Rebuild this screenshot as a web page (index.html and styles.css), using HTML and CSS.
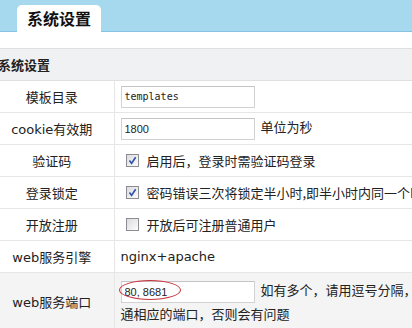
FILE: index.html
```html
<!DOCTYPE html>
<html lang="zh-CN">
<head>
  <meta charset="UTF-8">
  <title>系统设置</title>
  <link rel="stylesheet" href="styles.css">
</head>
<body>
  <div class="topbar">
    <div class="tab">系统设置</div>
  </div>

  <div class="panel">
    <table class="form">
      <colgroup><col class="col-label"><col class="col-value"></colgroup>
      <tr class="head"><th colspan="2">系统设置</th></tr>
      <tr>
        <td class="label">模板目录</td>
        <td class="value"><input class="text mono" type="text" value="templates"></td>
      </tr>
      <tr>
        <td class="label">cookie有效期</td>
        <td class="value"><input class="text" type="text" value="1800"><span class="hint">单位为秒</span></td>
      </tr>
      <tr>
        <td class="label">验证码</td>
        <td class="value"><span class="check on"><svg viewBox="0 0 11 11" width="11" height="11"><path d="M2.5 5.5 L4.6 8.4 L8.6 2.2" fill="none" stroke="#2a4fa8" stroke-width="1.6"/></svg></span><span class="opt">启用后，登录时需验证码登录</span></td>
      </tr>
      <tr>
        <td class="label">登录锁定</td>
        <td class="value"><span class="check on"><svg viewBox="0 0 11 11" width="11" height="11"><path d="M2.5 5.5 L4.6 8.4 L8.6 2.2" fill="none" stroke="#2a4fa8" stroke-width="1.6"/></svg></span><span class="opt">密码错误三次将锁定半小时,即半小时内同一个IP不能登录</span></td>
      </tr>
      <tr>
        <td class="label">开放注册</td>
        <td class="value"><span class="check"></span><span class="opt">开放后可注册普通用户</span></td>
      </tr>
      <tr>
        <td class="label">web服务引擎</td>
        <td class="value">nginx+apache</td>
      </tr>
      <tr class="active">
        <td class="label">web服务端口</td>
        <td class="value wrap">
          <span class="marked"><input class="text" type="text" value="80, 8681"><span class="ring"></span></span><span class="hint">如有多个，请用逗号分隔，并开通相应的端口，否则会有问题</span>
        </td>
      </tr>
    </table>
  </div>
</body>
</html>
```

FILE: styles.css
```css
body {
    margin: 0;
    width: 412px;
    height: 328px;
    overflow: hidden;
    background: #fff;
    color: #222;
    font-family: "DejaVu Sans", "Noto Sans CJK SC", sans-serif;
    font-size: 13px;
}

.topbar {
    display: flex;
    align-items: flex-end;
    height: 31px;
    padding-left: 17px;
    background: #a6d9ee;
    border-bottom: 1px solid #86c2e2;
}

.tab {
    margin-bottom: -1px;
    height: 27px;
    padding: 0 10px;
    background: #fff;
    border-radius: 5px 5px 0 0;
    font-family: "Noto Sans CJK SC", sans-serif;
    font-size: 16px;
    font-weight: bold;
    line-height: 27px;
    color: #111;
}

.panel {
    padding-top: 16px;
}

.form {
    width: 470px;
    margin-left: -10px;
    border-collapse: collapse;
    table-layout: fixed;
}

.col-label {
    width: 124px;
}

.col-value {
    width: 346px;
}

.form th {
    height: 31px;
    padding: 0 8px;
    text-align: left;
    background: #f0f1f3;
    border-top: 1px solid #dfe0e2;
    border-bottom: 1px solid #dfe0e2;
    font-family: "Noto Sans CJK SC", sans-serif;
    font-size: 13px;
    font-weight: bold;
}

.form td {
    height: 31px;
    padding: 0 6px;
    border-bottom: 1px solid #e6e6e6;
    vertical-align: middle;
    white-space: nowrap;
    overflow: hidden;
}

.form td.label {
    text-align: center;
    border-right: 1px solid #e6e6e6;
}

.form tr.active td {
    height: 50px;
    background: #f4f4f4;
}

.form td.wrap {
    white-space: normal;
    overflow: visible;
    padding: 4px 10px 3px 6px;
    line-height: 21px;
}

.text {
    box-sizing: border-box;
    width: 134px;
    height: 22px;
    margin: 0;
    padding: 0 3px;
    border: 1px solid #d2d2d2;
    border-top-color: #c4c4c4;
    background: #fff;
    color: #222;
    font-family: "Liberation Sans", sans-serif;
    font-size: 11px;
    vertical-align: middle;
}

.mono {
    font-family: "DejaVu Sans Mono", monospace;
    font-size: 10px;
}

.hint {
    margin-left: 6px;
    font-family: "Noto Sans CJK SC", sans-serif;
}

.opt {
    margin-left: 8px;
    font-family: "Noto Sans CJK SC", sans-serif;
    vertical-align: middle;
}

.check {
    display: inline-flex;
    align-items: center;
    justify-content: center;
    box-sizing: border-box;
    width: 13px;
    height: 13px;
    margin-left: 5px;
    border: 1px solid #8d8d96;
    background: linear-gradient(135deg, #dcdce0, #fbfbfb);
    vertical-align: middle;
}

.marked {
    position: relative;
    display: inline-block;
    vertical-align: middle;
}

.ring {
    position: absolute;
    left: -2px;
    top: 0;
    width: 62px;
    height: 20px;
    border: 1px solid #c8323a;
    border-radius: 50%;
    box-sizing: border-box;
}
```
